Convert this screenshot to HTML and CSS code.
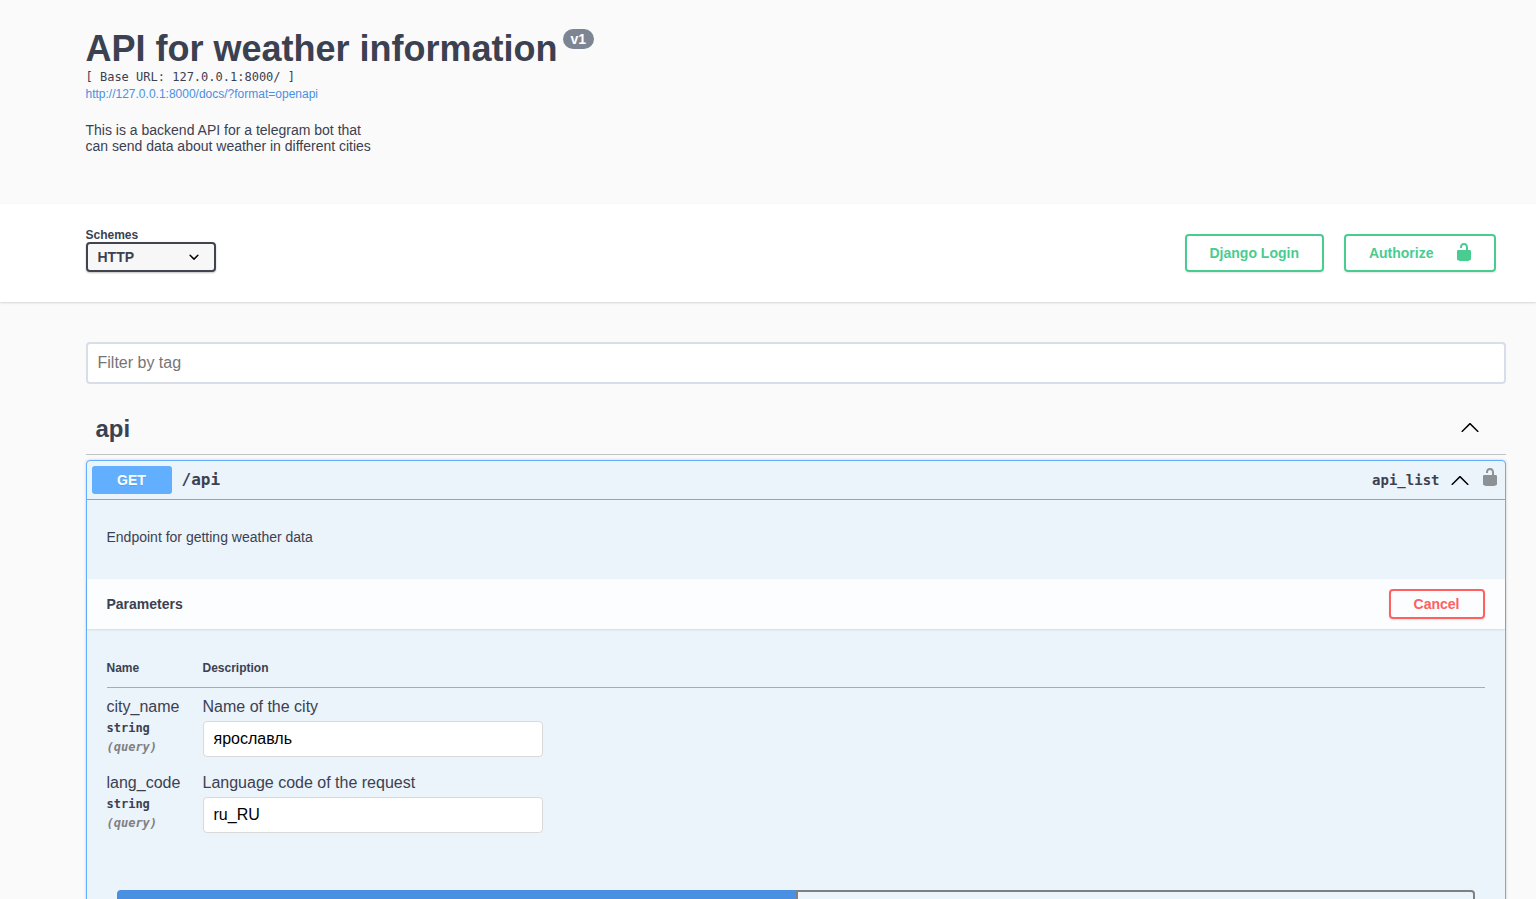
FILE: index.html
```
<!DOCTYPE html>
<html lang="en">
<head>
<meta charset="utf-8">
<title>API for weather information</title>
<link rel="stylesheet" href="styles.css">
</head>
<body>
<svg class="symbols" aria-hidden="true">
  <symbol id="unlocked" viewBox="0 0 20 20"><path d="M15.8 8H14V5.6C14 2.703 12.665 1 10 1 7.334 1 6 2.703 6 5.6V6h2v-.801C8 3.754 8.797 3 10 3c1.203 0 2 .754 2 2.199V8H4c-.553 0-1 .646-1 1.199V17c0 .549.428 1.139.951 1.307l1.197.387C5.672 18.861 6.55 19 7.1 19h5.8c.549 0 1.428-.139 1.951-.307l1.196-.387c.524-.167.953-.757.953-1.306V9.199C17 8.646 16.352 8 15.8 8z"/></symbol>
  <symbol id="arrow-up" viewBox="0 0 20 20"><path d="M17.418 14.908c.272.268.709.268.979 0s.271-.701 0-.969l-7.908-7.83c-.27-.268-.707-.268-.979 0l-7.908 7.83c-.27.268-.27.701 0 .969.271.268.709.268.979 0L10 7.767l7.418 7.141z"/></symbol>
</svg>

<header class="section info">
  <div class="wrapper">
    <h1 class="title">API for weather information<span class="version">v1</span></h1>
    <div class="base-url">[ Base URL: 127.0.0.1:8000/ ]</div>
    <a class="spec-link" href="http://127.0.0.1:8000/docs/?format=openapi">http://127.0.0.1:8000/docs/?format=openapi</a>
    <p class="about">This is a backend API for a telegram bot that<br>can send data about weather in different cities</p>
  </div>
</header>

<section class="section schemes">
  <div class="wrapper schemes-row">
    <div class="scheme-field">
      <label class="scheme-label" for="scheme">Schemes</label>
      <select class="scheme-select" id="scheme"><option>HTTP</option></select>
    </div>
    <div class="auth">
      <button class="btn btn-green" type="button">Django Login</button>
      <button class="btn btn-green" type="button">Authorize<svg class="icon lock"><use href="#unlocked"/></svg></button>
    </div>
  </div>
</section>

<main class="section main">
  <div class="wrapper">
    <input class="filter" type="text" placeholder="Filter by tag" aria-label="Filter by tag">
    <div class="tag">
      <h2 class="tag-name">api</h2>
      <button class="icon-btn tag-toggle" type="button" aria-label="Collapse api"><svg class="icon"><use href="#arrow-up"/></svg></button>
    </div>
    <article class="operation">
      <div class="summary">
        <span class="method">GET</span>
        <span class="path">/api</span>
        <span class="operation-id">api_list</span>
        <button class="icon-btn toggle" type="button" aria-label="Collapse operation"><svg class="icon"><use href="#arrow-up"/></svg></button>
        <button class="icon-btn auth-lock" type="button" aria-label="Authorization"><svg class="icon"><use href="#unlocked"/></svg></button>
      </div>
      <p class="description">Endpoint for getting weather data</p>
      <div class="params-header">
        <h3 class="params-title">Parameters</h3>
        <button class="btn btn-cancel" type="button">Cancel</button>
      </div>
      <div class="params-body">
        <table class="params">
          <thead>
            <tr><th class="col-name">Name</th><th>Description</th></tr>
          </thead>
          <tbody>
            <tr>
              <td><label class="param-name" for="city">city_name</label><div class="param-type">string</div><div class="param-in">(query)</div></td>
              <td><div class="param-text">Name of the city</div><input class="param-input" id="city" type="text" value="ярославль"></td>
            </tr>
            <tr>
              <td><label class="param-name" for="lang">lang_code</label><div class="param-type">string</div><div class="param-in">(query)</div></td>
              <td><div class="param-text">Language code of the request</div><input class="param-input" id="lang" type="text" value="ru_RU"></td>
            </tr>
          </tbody>
        </table>
      </div>
      <div class="actions">
        <button class="action execute" type="button" aria-label="Execute"></button>
        <button class="action clear" type="button" aria-label="Clear"></button>
      </div>
    </article>
  </div>
</main>
</body>
</html>
```
FILE: styles.css
```
* { box-sizing: border-box; }
html { scrollbar-width: none; }
body {
  margin: 0;
  background: #fafafa;
  color: #3b4151;
  font-family: "Liberation Sans", Arial, sans-serif;
  font-size: 14px;
}
h1, h2, h3, p { margin: 0; }
button, input, select { font-family: inherit; margin: 0; }
.symbols { display: none; }

.section { padding-left: 55px; }
.wrapper { max-width: 1460px; margin: 0 auto; padding: 0 20px; }
.icon { display: block; width: 20px; height: 20px; }

.info { padding-top: 28px; padding-bottom: 50px; }
.title { font-size: 36px; line-height: 41px; }
.version {
  display: inline-block;
  margin-left: 5px;
  padding: 2px 8px;
  border-radius: 10px;
  background: #7d8492;
  color: #fff;
  font-size: 14px;
  line-height: 16px;
  vertical-align: 17px;
}
.base-url { font: 12px/16px "DejaVu Sans Mono", monospace; }
.spec-link { display: block; color: #4990e2; font-size: 12px; line-height: 18px; text-decoration: none; }
.about { margin-top: 19px; line-height: 16px; }

.schemes { padding-top: 30px; padding-bottom: 30px; background: #fff; box-shadow: 0 1px 2px rgba(0, 0, 0, .15); }
.schemes-row { display: flex; justify-content: space-between; align-items: flex-end; }
.scheme-field { display: flex; flex-direction: column; margin-top: -6px; }
.scheme-label { font-size: 12px; font-weight: 700; line-height: 14px; }
.scheme-select {
  width: 130px;
  height: 30px;
  padding: 0 40px 0 10px;
  border: 2px solid #41444e;
  border-radius: 4px;
  appearance: none;
  background: #f7f7f7 url('data:image/svg+xml,<svg xmlns="http://www.w3.org/2000/svg" viewBox="0 0 20 20"><path d="M13.418 7.859a.695.695 0 01.978 0 .68.68 0 010 .969l-3.908 3.83a.697.697 0 01-.979 0l-3.908-3.83a.68.68 0 010-.969.695.695 0 01.978 0L10 11l3.418-3.141z"/></svg>') right 10px center / 20px no-repeat;
  box-shadow: 0 1px 2px rgba(0, 0, 0, .25);
  color: #3b4151;
  font-size: 14px;
  font-weight: 700;
}
.auth { display: flex; gap: 20px; padding-right: 10px; }
.btn {
  display: flex;
  align-items: center;
  justify-content: center;
  border: 2px solid;
  border-radius: 4px;
  background: transparent;
  box-shadow: 0 1px 2px rgba(0, 0, 0, .1);
  font-size: 14px;
  font-weight: 700;
}
.btn-green { height: 38px; padding: 0 23px; color: #49cc90; }
.lock { margin: -2px -3px 0 20px; fill: #49cc90; }

.main { padding-top: 40px; }
.filter {
  display: block;
  width: 100%;
  height: 42px;
  padding: 0 10px;
  border: 2px solid #d8dde7;
  border-radius: 4px;
  background: #fff;
  font-size: 16px;
}
.filter::placeholder { color: #757575; }
.tag {
  display: flex;
  align-items: center;
  justify-content: space-between;
  margin-top: 20px;
  padding: 10px 26px 10px 10px;
  border-bottom: 1px solid rgba(59, 65, 81, .3);
}
.tag-name { font-size: 24px; line-height: 30px; }
.icon-btn { padding: 0; border: 0; background: none; }
.tag-toggle { padding-bottom: 4px; }

.operation {
  margin-top: 5px;
  border: 1px solid #61affe;
  border-radius: 4px;
  background: #ebf3fb;
  box-shadow: 0 0 3px rgba(0, 0, 0, .19);
}
.summary { display: flex; align-items: center; padding: 5px; border-bottom: 1px solid #61affe; }
.method {
  width: 80px;
  padding: 6px 0;
  border-radius: 3px;
  background: #61affe;
  color: #fff;
  font-weight: 700;
  line-height: 16px;
  text-align: center;
  text-shadow: 0 1px 0 rgba(0, 0, 0, .1);
}
.path { flex: 1; padding: 0 10px; font: 700 16px/18px "DejaVu Sans Mono", monospace; }
.operation-id { font: 700 14px/18px "DejaVu Sans Mono", monospace; }
.toggle { margin-left: 10px; }
.auth-lock { margin-left: 10px; padding-bottom: 6px; opacity: .4; }
.description { padding: 29px 20px 34px; line-height: 16px; }
.params-header {
  display: flex;
  align-items: center;
  justify-content: space-between;
  padding: 10px 20px;
  background: rgba(255, 255, 255, .8);
  box-shadow: 0 1px 2px rgba(0, 0, 0, .1);
}
.params-title { font-size: 14px; }
.btn-cancel { height: 30px; padding: 0 23px; border-color: #ff6060; color: #ff6060; }

.params-body { padding: 20px; }
.params { width: 100%; border-collapse: separate; border-spacing: 0; }
.params th {
  padding: 12px 0;
  border-bottom: 1px solid rgba(59, 65, 81, .4);
  font-size: 12px;
  line-height: 14px;
  text-align: left;
}
.params td { padding: 10px 0 0; vertical-align: top; }
.params .col-name { width: 96px; }
.param-name { display: block; font-size: 16px; line-height: 18px; }
.param-text { font-size: 16px; line-height: 18px; }
.param-type { padding-top: 5px; font: 700 12px/14px "DejaVu Sans Mono", monospace; }
.param-in { padding-top: 5px; color: #808080; font: italic 700 12px/14px "DejaVu Sans Mono", monospace; }
.param-input {
  display: block;
  width: 340px;
  max-width: 100%;
  height: 36px;
  margin: 5px 0 7px;
  padding: 0 10px;
  border: 1px solid #d9d9d9;
  border-radius: 4px;
  background: #fff;
  color: #000;
  font-size: 16px;
}
.actions { display: flex; padding: 30px; }
.action { flex: 1; height: 40px; border: 2px solid #4990e2; }
.execute { border-radius: 4px 0 0 4px; background: #4990e2; }
.clear { border-color: #808080; border-radius: 0 4px 4px 0; background: transparent; }
```
